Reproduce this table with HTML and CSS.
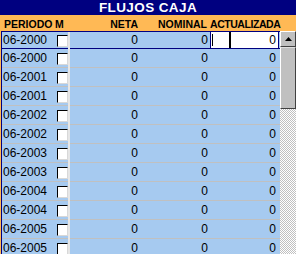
FILE: index.html
```html
<!DOCTYPE html>
<html>
<head>
<meta charset="utf-8">
<link rel="stylesheet" href="styles.css">
</head>
<body>
<div class="form">
  <div class="title">FLUJOS CAJA</div>
  <div class="head">
    <div class="h-periodo">PERIODO</div>
    <div class="h-m">M</div>
    <div class="h-num">NETA</div>
    <div class="h-num">NOMINAL</div>
    <div class="h-num h-act">ACTUALIZADA</div>
  </div>
  <div class="body">
    <div class="grid">
      <div class="row current">
        <div class="c-per">06-2000</div><div class="c-chk"><span class="chk"></span></div><div class="c-num">0</div><div class="c-num c-nom">0</div><div class="c-act"><div class="input"><span class="caret1"></span><span class="caret2"></span><span class="val">0</span></div></div>
      </div>
      <div class="row"><div class="c-per">06-2000</div><div class="c-chk"><span class="chk"></span></div><div class="c-num">0</div><div class="c-num c-nom">0</div><div class="c-num c-actv">0</div></div>
      <div class="row"><div class="c-per">06-2001</div><div class="c-chk"><span class="chk"></span></div><div class="c-num">0</div><div class="c-num c-nom">0</div><div class="c-num c-actv">0</div></div>
      <div class="row"><div class="c-per">06-2001</div><div class="c-chk"><span class="chk"></span></div><div class="c-num">0</div><div class="c-num c-nom">0</div><div class="c-num c-actv">0</div></div>
      <div class="row"><div class="c-per">06-2002</div><div class="c-chk"><span class="chk"></span></div><div class="c-num">0</div><div class="c-num c-nom">0</div><div class="c-num c-actv">0</div></div>
      <div class="row"><div class="c-per">06-2002</div><div class="c-chk"><span class="chk"></span></div><div class="c-num">0</div><div class="c-num c-nom">0</div><div class="c-num c-actv">0</div></div>
      <div class="row"><div class="c-per">06-2003</div><div class="c-chk"><span class="chk"></span></div><div class="c-num">0</div><div class="c-num c-nom">0</div><div class="c-num c-actv">0</div></div>
      <div class="row"><div class="c-per">06-2003</div><div class="c-chk"><span class="chk"></span></div><div class="c-num">0</div><div class="c-num c-nom">0</div><div class="c-num c-actv">0</div></div>
      <div class="row"><div class="c-per">06-2004</div><div class="c-chk"><span class="chk"></span></div><div class="c-num">0</div><div class="c-num c-nom">0</div><div class="c-num c-actv">0</div></div>
      <div class="row"><div class="c-per">06-2004</div><div class="c-chk"><span class="chk"></span></div><div class="c-num">0</div><div class="c-num c-nom">0</div><div class="c-num c-actv">0</div></div>
      <div class="row"><div class="c-per">06-2005</div><div class="c-chk"><span class="chk"></span></div><div class="c-num">0</div><div class="c-num c-nom">0</div><div class="c-num c-actv">0</div></div>
      <div class="row"><div class="c-per">06-2005</div><div class="c-chk"><span class="chk"></span></div><div class="c-num">0</div><div class="c-num c-nom">0</div><div class="c-num c-actv">0</div></div>
    </div>
    <div class="scrollbar">
      <div class="btn-up"><svg width="7" height="4" viewBox="0 0 7 4"><path d="M3.5 0 L7 4 L0 4 Z" fill="#000"/></svg></div>
      <div class="thumb"></div>
      <div class="track"></div>
    </div>
  </div>
</div>
</body>
</html>
```
FILE: styles.css
```css
html, body {
  margin: 0;
  padding: 0;
}
body {
  width: 296px;
  height: 254px;
  overflow: hidden;
  font-family: "Liberation Sans", Arial, sans-serif;
}
.form {
  width: 296px;
  height: 254px;
  background: #ffb955;
  display: flex;
  flex-direction: column;
  overflow: hidden;
}
.title {
  height: 15px;
  background: #000080;
  color: #fff;
  font-weight: bold;
  font-size: 13.5px;
  line-height: 16px;
  text-align: center;
  letter-spacing: 0.4px;
}
.head {
  height: 16px;
  display: grid;
  grid-template-columns: 53px 15px 71px 69px 69px;
  padding-left: 2px;
  font-weight: bold;
  font-size: 10.5px;
  line-height: 18px;
  color: #000;
}
.h-periodo { padding-left: 2px; }
.h-num { text-align: right; padding-right: 3px; white-space: nowrap; }
.h-act { letter-spacing: -0.45px; padding-right: 1px; }
.body {
  flex: 1;
  display: flex;
  padding-left: 1px;
  min-height: 0;
}
.grid {
  width: 278px;
  border-top: 1px solid #000080;
  border-left: 1px solid #000080;
  background: #a6caf0;
  overflow: hidden;
}
.row {
  height: 18px;
  border-bottom: 1px solid #c0c0c0;
  display: grid;
  grid-template-columns: 53px 15px 71px 69px 69px;
  font-size: 12px;
  line-height: 19px;
  color: #000;
}
.row.current {
  height: 16px;
  line-height: 17px;
  border-bottom-color: #000080;
}
.c-per { padding-left: 1px; }
.c-chk {
  display: flex;
  align-items: center;
  border-right: 2px solid #e6e6e6;
}
.chk {
  margin-left: 2px;
  width: 10px;
  height: 10px;
  background: #fff;
  border-top: 1px solid #000;
  border-left: 1px solid #000;
  border-right: 1px solid #d8d8d8;
  border-bottom: 1px solid #d8d8d8;
}
.c-num { text-align: right; padding-right: 3px; }
.c-nom { padding-right: 2px; }
.c-actv { padding-right: 3px; }
.c-act { position: relative; }
.input {
  position: absolute;
  left: 0;
  top: -1px;
  right: 0;
  height: 18px;
  box-sizing: border-box;
  border: 1px solid #000080;
  background: #fff;
  display: flex;
  align-items: center;
}
.caret1 {
  width: 1px;
  height: 12px;
  background: #000;
  margin-left: 1px;
}
.caret2 {
  width: 2px;
  height: 100%;
  background: #000;
  margin-left: 16px;
}
.val {
  margin-left: auto;
  padding-right: 2px;
  line-height: 16px;
}
.scrollbar {
  width: 16px;
  display: flex;
  flex-direction: column;
}
.btn-up {
  height: 16px;
  box-sizing: border-box;
  background: #c0c0c0;
  border-top: 1px solid #fff;
  border-left: 1px solid #fff;
  border-right: 1px solid #404040;
  border-bottom: 1px solid #404040;
  display: flex;
  align-items: center;
  justify-content: center;
}
.thumb {
  height: 62px;
  box-sizing: border-box;
  background: #c0c0c0;
  border-top: 1px solid #e0e0e0;
  border-left: 1px solid #fff;
  border-right: 1px solid #404040;
  border-bottom: 1px solid #404040;
}
.track {
  flex: 1;
  background: repeating-conic-gradient(#c0c0c0 0 25%, #fff 0 50%) 0 0 / 2px 2px;
}
```
